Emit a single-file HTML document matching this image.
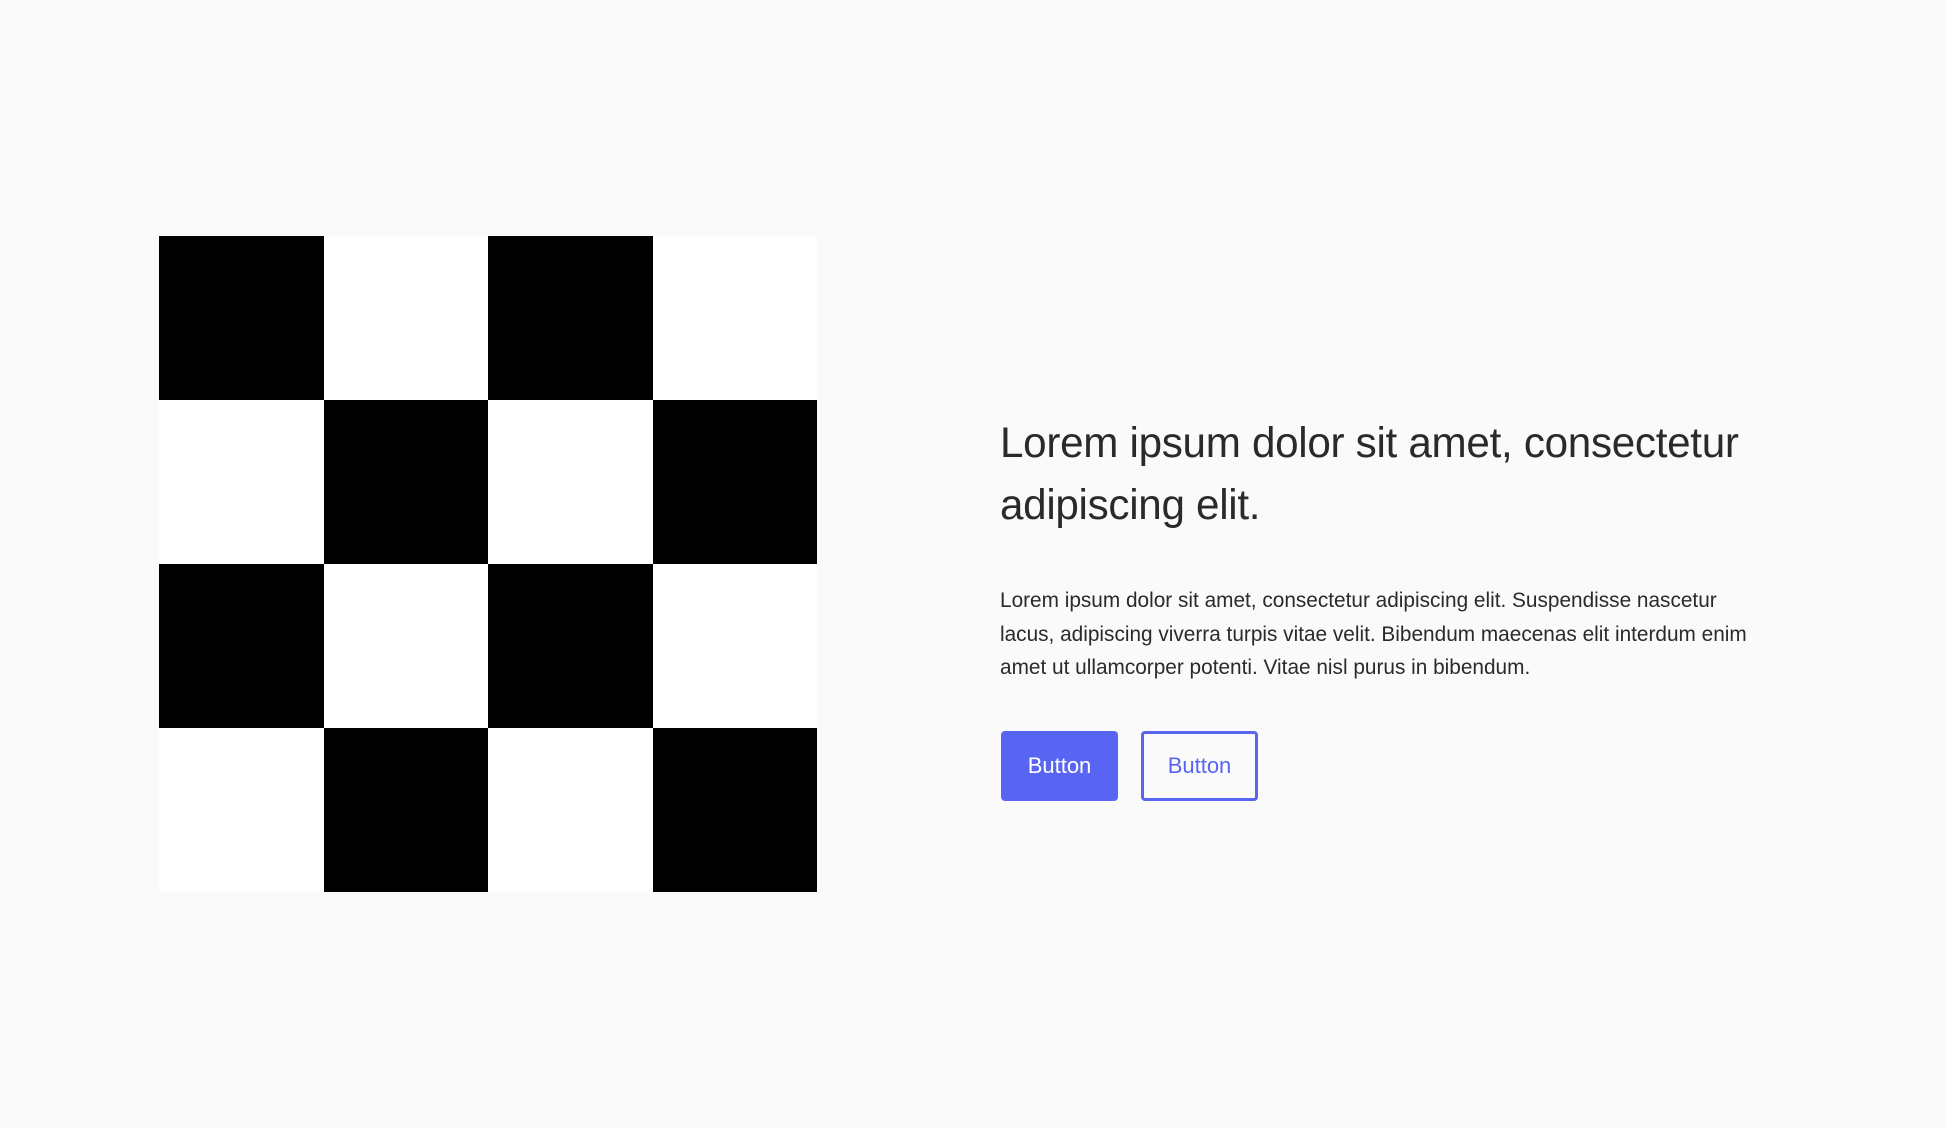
<!DOCTYPE html>
<html><head><meta charset="utf-8"><style>
html,body{margin:0;padding:0;background:#fafafa;width:1945px;height:1128px;overflow:hidden;font-family:"Liberation Sans",sans-serif;color:#2a2a2a}
.board{position:absolute;left:159px;top:236px;width:658px;height:656px;display:grid;grid-template-columns:repeat(4,1fr);grid-template-rows:repeat(4,1fr)}
.b{background:#000}.w{background:#fff}
h1{position:absolute;left:1000px;top:412px;margin:0;font-weight:400;font-size:42.2px;line-height:62px;letter-spacing:-0.3px;white-space:nowrap}
p{position:absolute;left:1000px;top:584px;margin:0;font-size:20.8px;line-height:33.5px;white-space:nowrap}
.btn{position:absolute;top:731px;width:117px;height:70px;box-sizing:border-box;border-radius:4px;font-size:22px;display:flex;align-items:center;justify-content:center}
.p1{left:1001px;background:#5865f2;color:#fff}
.p2{left:1141px;border:3px solid #5865f2;color:#5865f2;background:transparent}
</style></head><body>
<div class="board">
<div class="b"></div><div class="w"></div><div class="b"></div><div class="w"></div>
<div class="w"></div><div class="b"></div><div class="w"></div><div class="b"></div>
<div class="b"></div><div class="w"></div><div class="b"></div><div class="w"></div>
<div class="w"></div><div class="b"></div><div class="w"></div><div class="b"></div>
</div>
<h1>Lorem ipsum dolor sit amet, consectetur<br>adipiscing elit.</h1>
<p>Lorem ipsum dolor sit amet, consectetur adipiscing elit. Suspendisse nascetur<br>lacus, adipiscing viverra turpis vitae velit. Bibendum maecenas elit interdum enim<br>amet ut ullamcorper potenti. Vitae nisl purus in bibendum.</p>
<div class="btn p1">Button</div>
<div class="btn p2">Button</div>
</body></html>
